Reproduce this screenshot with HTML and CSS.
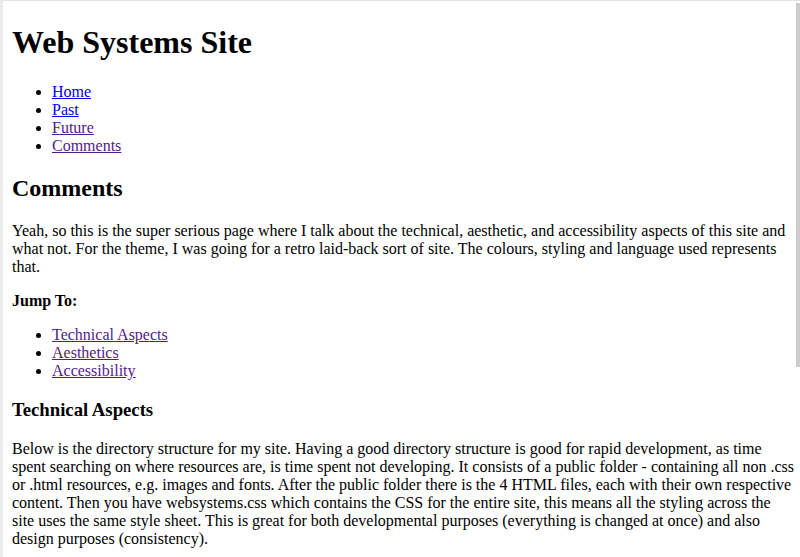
FILE: index.html
```html
<!DOCTYPE html>
<html lang="en">
<head>
<meta charset="utf-8">
<title>Web Systems Site - Comments</title>
<link rel="stylesheet" href="styles.css">
</head>
<body>
<div class="frame">
  <div class="page">
    <h1>Web Systems Site</h1>
    <ul>
      <li><a href="#home">Home</a></li>
      <li><a href="#past">Past</a></li>
      <li><a class="visited" href="#future">Future</a></li>
      <li><a class="visited" href="#comments">Comments</a></li>
    </ul>
    <h2>Comments</h2>
    <p>Yeah, so this is the super serious page where I talk about the technical, aesthetic, and accessibility aspects of this site and what not. For the theme, I was going for a retro laid-back sort of site. The colours, styling and language used represents that.</p>
    <p><strong>Jump To:</strong></p>
    <ul>
      <li><a class="visited" href="#technical">Technical Aspects</a></li>
      <li><a class="visited" href="#aesthetics">Aesthetics</a></li>
      <li><a class="visited" href="#accessibility">Accessibility</a></li>
    </ul>
    <h3 id="technical">Technical Aspects</h3>
    <p>Below is the directory structure for my site. Having a good directory structure is good for rapid development, as time spent searching on where resources are, is time spent not developing. It consists of a public folder - containing all non .css or .html resources, e.g. images and fonts. After the public folder there is the 4 HTML files, each with their own respective content. Then you have websystems.css which contains the CSS for the entire site, this means all the styling across the site uses the same style sheet. This is great for both developmental purposes (everything is changed at once) and also design purposes (consistency).</p>
  </div>
  <div class="thumb"></div>
</div>
</body>
</html>
```
FILE: styles.css
```css
html, body {
  margin: 0;
  padding: 0;
  overflow: hidden;
  height: 100%;
  background: #ffffff;
}
body {
  font-family: "Liberation Serif", "Times New Roman", serif;
  font-size: 16px;
  color: #000000;
}
.frame {
  position: relative;
  height: 100%;
  border-top: 1px solid #e3e3e3;
  border-left: 3px solid #ececec;
  box-sizing: border-box;
}
.page {
  padding: 0 4.5px 0 9px;
}
h1 {
  font-size: 32px;
  margin: 23px 0 22.44px;
}
h2 {
  font-size: 24px;
  margin: 19.92px 0;
}
h3 {
  font-size: 18.72px;
  margin: 18.72px 0;
}
p {
  margin: 16px 0;
}
ul {
  margin: 16px 0;
  padding-left: 40px;
}
a {
  color: #0000ee;
}
a.visited {
  color: #551a8b;
}
.thumb {
  position: absolute;
  top: 2px;
  right: 0;
  width: 4px;
  height: 364px;
  background: #cdcdcd;
}
```
